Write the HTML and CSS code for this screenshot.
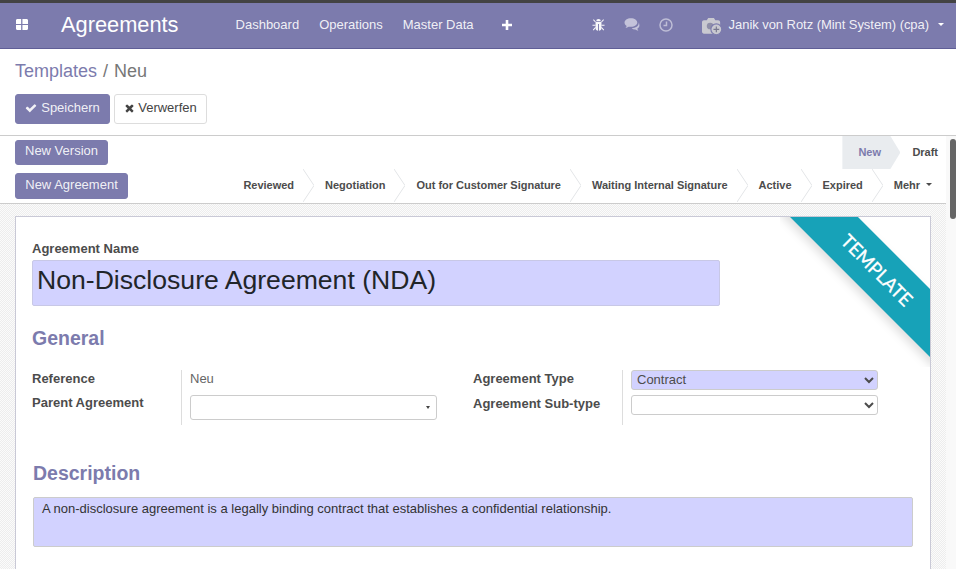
FILE: index.html
```html
<!DOCTYPE html>
<html lang="de">
<head>
<meta charset="utf-8">
<title>Agreements</title>
<link rel="stylesheet" href="styles.css">
</head>
<body>
<header class="navbar">
  <svg class="apps" viewBox="0 0 14 11" preserveAspectRatio="none"><path d="M1 0h5v5H0V1zM7.500 0H13l1 1v4H7.500zM0 6h6v5H1l-1-1zM7.500 6H14v4l-1 1H7.500z"/></svg>
  <span class="brand">Agreements</span>
  <nav class="menu">
    <a>Dashboard</a><a>Operations</a><a>Master Data</a>
    <svg class="plus" viewBox="0 0 10 10"><path d="M3.700 0h2.600v3.700H10v2.600H6.300V10H3.700V6.300H0V3.700h3.700z"/></svg>
  </nav>
  <div class="systray">
    <svg class="tray bug" viewBox="0 0 14 14"><path d="M4.500 3.500a2.500 2.500 0 0 1 5 0zM3.800 4.200h6.400V11c0 1.600-1.300 2.600-2.700 2.800V6.500h-1v7.300C5.100 13.600 3.800 12.600 3.800 11z"/><path d="M1.500 1.800 3.800 4.300M12.500 1.800 10.200 4.300M.5 7.800h3.300M13.500 7.800h-3.300M1.300 13l2.600-2.800M12.700 13l-2.600-2.800" class="bug-legs"/></svg>
    <svg class="tray comments" viewBox="0 0 16 14"><path d="M6.500 1C3 1 .5 2.900.5 5.200c0 1.300.8 2.400 2 3.200-.2.700-.6 1.300-1.100 1.900 1.100-.2 2.100-.7 2.900-1.300.7.200 1.400.2 2.200.2 3.500 0 6-1.800 6-4S10 1 6.500 1z"/><path d="M13.800 4.800c.1.300.1.500.1.800 0 2.800-3 4.800-6.700 4.900.9.800 2.100 1.200 3.500 1.100.8.600 1.800 1.100 2.900 1.300-.5-.6-.9-1.200-1.100-1.900 1.300-.7 2-1.800 2-3 0-1.300-.3-2.300-.7-3.200z"/></svg>
    <svg class="tray clock" viewBox="0 0 14 14"><circle cx="7" cy="7" r="6"/><path d="M7.500 3.500v4H4.500"/></svg>
    <svg class="avatar" viewBox="0 0 22 20"><path class="cam" d="M2 4h3l1.500-2.500h6L14 4h3c1 0 2 1 2 2v10c0 1-1 2-2 2H2c-1 0-2-1-2-2V6c0-1 1-2 2-2z"/><circle class="lens" cx="8.500" cy="10" r="3.500"/><circle class="add" cx="15" cy="13.500" r="5.700"/><path class="add-plus" d="M15 10.500v6M12 13.500h6"/></svg>
    <span class="user">Janik von Rotz (Mint System) (cpa)</span>
    <i class="caret caret-light"></i>
  </div>
</header>

<section class="control">
  <div class="crumbs"><a>Templates</a><span class="sep">/</span><span class="cur">Neu</span></div>
  <div class="actions">
    <button class="btn primary save"><svg class="ico" viewBox="0 0 1792 1792"><path d="M1671 566q0 40-28 68l-724 724-136 136q-28 28-68 28t-68-28l-136-136-362-362q-28-28-28-68t28-68l136-136q28-28 68-28t68 28l294 295 656-657q28-28 68-28t68 28l136 136q28 28 28 68z"/></svg>Speichern</button>
    <button class="btn plain"><svg class="ico" viewBox="0 0 1408 1792"><path d="M1298 1322q0 40-28 68l-136 136q-28 28-68 28t-68-28l-294-294-294 294q-28 28-68 28t-68-28l-136-136q-28-28-28-68t28-68l294-294-294-294q-28-28-28-68t28-68l136-136q28-28 68-28t68 28l294 294 294-294q28-28 68-28t68 28l136 136q28 28 28 68t-28 68l-294 294 294 294q28 28 28 68z"/></svg>Verwerfen</button>
  </div>
</section>

<div class="workspace">
  <main class="main">
    <div class="statusbar">
      <div class="status-buttons">
        <button class="btn primary small">New Version</button>
        <button class="btn primary small tall">New Agreement</button>
      </div>
      <div class="stages">
        <div class="stage-row top">
          <div class="stage-current"><span>New</span></div>
          <span class="stage-draft">Draft</span>
        </div>
        <div class="stage-row">
          <span class="stage">Reviewed</span>
          <svg class="chev" viewBox="0 0 11 33"><polyline points="0,0 11,16.500 0,33"/></svg>
          <span class="stage">Negotiation</span>
          <svg class="chev" viewBox="0 0 11 33"><polyline points="0,0 11,16.500 0,33"/></svg>
          <span class="stage">Out for Customer Signature</span>
          <svg class="chev" viewBox="0 0 11 33"><polyline points="0,0 11,16.500 0,33"/></svg>
          <span class="stage">Waiting Internal Signature</span>
          <svg class="chev" viewBox="0 0 11 33"><polyline points="0,0 11,16.500 0,33"/></svg>
          <span class="stage">Active</span>
          <svg class="chev" viewBox="0 0 11 33"><polyline points="0,0 11,16.500 0,33"/></svg>
          <span class="stage">Expired</span>
          <svg class="chev" viewBox="0 0 11 33"><polyline points="0,0 11,16.500 0,33"/></svg>
          <span class="stage more">Mehr<i class="caret caret-dark"></i></span>
        </div>
      </div>
    </div>

    <div class="sheet-area">
      <article class="sheet">
        <div class="ribbon"><span>TEMPLATE</span></div>
        <label class="name-label">Agreement Name</label>
        <input class="name-input" type="text" value="Non-Disclosure Agreement (NDA)">
        <h2 class="heading general">General</h2>
        <div class="groups">
          <div class="group">
            <div class="labels">
              <label class="lab first">Reference</label>
              <label class="lab">Parent Agreement</label>
            </div>
            <div class="fields left">
              <span class="readonly">Neu</span>
              <div class="m2o"><i class="caret caret-small"></i></div>
            </div>
          </div>
          <div class="group">
            <div class="labels">
              <label class="lab first">Agreement Type</label>
              <label class="lab second">Agreement Sub-type</label>
            </div>
            <div class="fields">
              <select class="sel required"><option>Contract</option></select>
              <select class="sel"><option></option></select>
            </div>
          </div>
        </div>
        <h2 class="heading description">Description</h2>
        <div class="desc">A non-disclosure agreement is a legally binding contract that establishes a confidential relationship.</div>
      </article>
    </div>
  </main>
  <div class="scrollbar"><div class="thumb"></div></div>
</div>
</body>
</html>
```
FILE: styles.css
```css
* { box-sizing: border-box; }
html, body { margin: 0; height: 569px; overflow: hidden; }
body { font-family: "Liberation Sans", Arial, sans-serif; font-size: 13px; color: #4c4c4c; background: #fff; display: flex; flex-direction: column; }

.navbar { flex: none; height: 49px; border-top: 3px solid #434343; border-bottom: 1px solid #5f5e97; background: #7c7bad; display: flex; align-items: center; padding-bottom: 2px; color: rgba(255,255,255,.9); }
.apps { width: 12px; height: 11px; margin-left: 16px; fill: #fff; flex: none; }
.brand { font-size: 21.800px; margin-left: 33px; color: #fff; }
.menu { display: flex; align-items: center; margin-left: 57px; gap: 20px; }
.plus { width: 10px; height: 10px; fill: #fff; margin-left: 8px; margin-right: 0; position: static; }
.systray { margin-left: auto; display: flex; align-items: center; margin-right: 12px; }
.tray { flex: none; }
.bug { width: 13px; height: 13px; fill: #fff; opacity: .95; margin-right: 19px; }
.bug-legs { fill: none; stroke: #fff; stroke-width: 1.100; }
.comments { width: 17px; height: 15px; fill: rgba(255,255,255,.55); margin-right: 18px; }
.clock { width: 14px; height: 14px; fill: none; stroke: rgba(255,255,255,.5); stroke-width: 1.500; margin-right: 29px; }
.avatar { width: 21px; height: 20px; margin-right: 6px; margin-top: 2px; flex: none; }
.cam { fill: #c9c9d0; }
.lens { fill: #8f8fa8; }
.add { fill: #c9c9d0; stroke: #7c7bad; stroke-width: 1.200; }
.add-plus { stroke: #77778f; stroke-width: 1.200; fill: none; }
.user { white-space: nowrap; letter-spacing: -.055px; }
.caret { display: inline-block; width: 0; height: 0; border-left: 3px solid transparent; border-right: 3px solid transparent; border-top: 3px solid currentColor; }
.caret-light { margin-left: 9px; color: #fff; }
.caret-dark { margin-left: 6px; }
.caret-small { border-width: 3px 2.500px 0; color: #444; }

.control { flex: none; height: 87px; border-bottom: 1px solid #ccc; padding: 0 15px; }
.crumbs { font-size: 18px; line-height: 20px; padding-top: 12px; color: #777; }
.crumbs a { color: #7c7bad; }
.sep { margin: 0 6px; color: #777; }
.actions { display: flex; gap: 4px; margin-top: 13px; }
.btn { font-family: inherit; font-size: 13px; border-radius: 3px; padding: 0; display: flex; align-items: center; justify-content: center; }
.primary { background: #7c7bad; border: 1px solid #7c7bad; color: rgba(255,255,255,.9); }
.plain { background: #fff; border: 1px solid #ddd; color: #444; }
.save { width: 95px; height: 30px; padding-bottom: 3px; }
.plain { width: 93px; height: 30px; padding-bottom: 3px; }
.ico { width: 12px; height: 12px; fill: currentColor; margin-right: 4px; flex: none; }
.plain .ico { width: 11px; margin-right: 3px; }

.workspace { flex: 1; min-height: 0; display: flex; }
.main { flex: 1; min-width: 0; display: flex; flex-direction: column; }
.scrollbar { flex: none; width: 10px; padding: 3px 0 0 4px; background: #f9f9f9; }
.thumb { width: 6px; height: 80px; background: #666; border-radius: 3px; }

.statusbar { flex: none; height: 68px; border-bottom: 1px solid #ccc; background: #fff; display: flex; justify-content: space-between; padding-left: 15px; }
.status-buttons { display: flex; flex-direction: column; align-items: flex-start; padding-top: 4px; gap: 8px; }
.small { width: 93px; height: 25px; padding: 0 0 5px; }
.small.tall { width: 113px; height: 26px; padding: 0 0 3px; }
.stages { display: flex; flex-direction: column; }
.stage-row { display: flex; align-items: center; height: 33px; font-size: 11px; font-weight: bold; letter-spacing: -.012px; color: #4c4c4c; padding-right: 14px; }
.stage-row.top { justify-content: flex-end; padding-right: 8px; }
.stage-current { width: 58px; height: 33px; background: #e9ecef; clip-path: polygon(0 0, 48px 0, 100% 50%, 48px 100%, 0 100%); display: flex; align-items: center; padding-left: 16px; padding-bottom: 2px; color: #7c7bad; }
.stage-draft { margin-left: 12px; padding-bottom: 2px; }
.stage { margin: 0 9px 0 11px; white-space: nowrap; padding-bottom: 2px; }
.more { margin-right: 0; display: flex; align-items: center; }
.chev { width: 11px; height: 33px; flex: none; fill: none; stroke: #e3e5e8; stroke-width: 1; }

.sheet-area { flex: 1; min-height: 0; padding: 12px 15px 0; background: repeating-conic-gradient(#ededed 0 25%, #fbfbfb 0 50%) 0 0 / 2px 2px; overflow: hidden; }
.sheet { position: relative; width: 916px; height: 500px; background: #fff; border: 1px solid #c9c9d6; padding: 24px 16px 0; }
.ribbon { position: absolute; top: 0; right: 0; width: 150px; height: 150px; overflow: hidden; }
.ribbon span { position: absolute; left: -13px; top: 29px; width: 220px; height: 48px; line-height: 48px; text-align: center; background: #17a2b8; color: #fff; font-family: Lato, sans-serif; font-size: 18.500px; -webkit-text-stroke: .3px #fff; transform: rotate(45deg); box-shadow: 0 5px 10px rgba(0,0,0,.13); }
.name-label { display: block; font-size: 13px; font-weight: bold; line-height: 15px; color: #4c4c4c; }
.name-input { display: block; width: 688px; height: 46px; margin-top: 4px; background: #d2d2ff; border: 1px solid #c8c8e6; border-radius: 2px; font-family: inherit; font-size: 26.600px; color: #212529; padding: 0 4px 5px; }
.heading { margin: 0; font-size: 19.500px; font-weight: bold; line-height: 23px; color: #7c7bad; }
.general { margin-top: 21px; }
.groups { display: flex; margin-top: 20px; height: 55px; }
.group { display: flex; width: 441px; }
.labels { width: 149px; flex: none; }
.lab { display: block; font-size: 13px; font-weight: bold; line-height: 15px; }
.first { margin-top: 1px; }
.lab + .lab { margin-top: 9px; }
.lab.second { margin-top: 10px; }
.fields { width: 257px; border-left: 1px solid #ddd; padding-left: 8px; display: flex; flex-direction: column; height: 55px; }
.readonly { line-height: 17px; color: #666; height: 25px; }
.m2o { height: 25px; width: 247px; background: #fff; border: 1px solid #ccc; border-radius: 3px; display: flex; justify-content: flex-end; align-items: center; padding-right: 6px; }
.sel { display: block; width: 247px; height: 20px; margin-bottom: 5px; font-family: inherit; font-size: 13px; color: #4c4c4c; background-color: #fff; border: 1px solid #ccc; border-radius: 3px; padding: 0 1px 3px; }
.sel.required { background-color: #d2d2ff; }
.description { margin-top: 37px; margin-left: 1px; }
.desc { width: 880px; height: 50px; margin: 12px 0 0 1px; background: #d2d2ff; border: 1px solid #ccc; border-radius: 2px; padding: 3px 8px; line-height: 15px; color: #333; }
```
